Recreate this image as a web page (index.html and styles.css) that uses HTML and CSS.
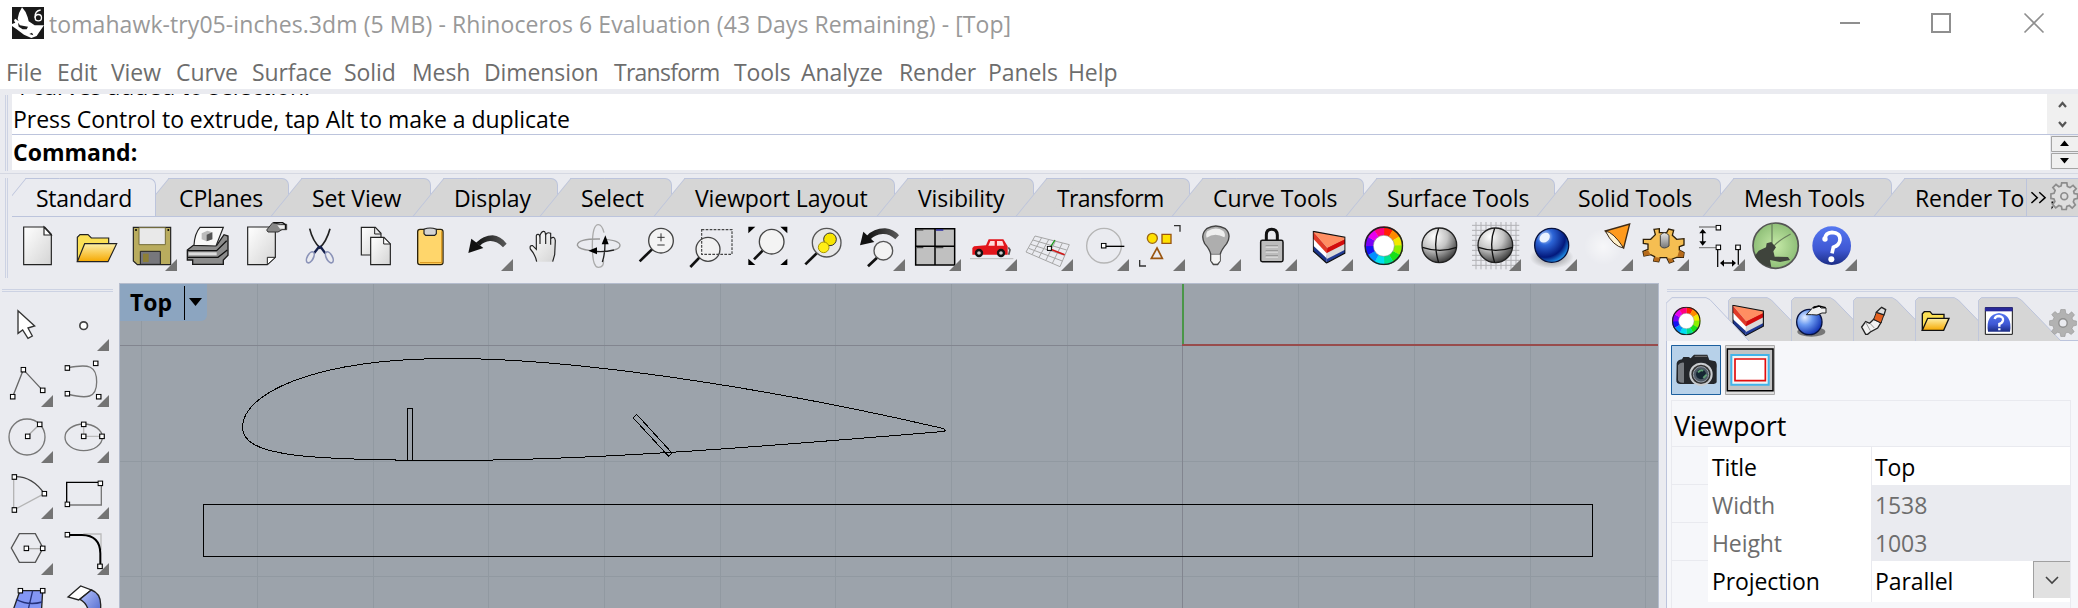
FILE: index.html
```html
<!DOCTYPE html>
<html lang="en">
<head>
<meta charset="utf-8">
<title>tomahawk-try05-inches.3dm - Rhinoceros 6</title>
<link rel="stylesheet" href="styles.css">
</head>
<body>
<svg class="defs" width="0" height="0" aria-hidden="true">
  <defs>
    <linearGradient id="paper" x1="0" y1="0" x2="1" y2="1"><stop offset="0" stop-color="#fff"/><stop offset="1" stop-color="#d4d4d4"/></linearGradient>
    <linearGradient id="gold" x1="0" y1="0" x2="0" y2="1"><stop offset="0" stop-color="#fdf0a8"/><stop offset="1" stop-color="#f5a800"/></linearGradient>
    <linearGradient id="steel" x1="0" y1="0" x2="0" y2="1"><stop offset="0" stop-color="#e8e8e8"/><stop offset="1" stop-color="#777"/></linearGradient>
    <linearGradient id="helpFill" x1="0" y1="0" x2="0" y2="1"><stop offset="0" stop-color="#5577f0"/><stop offset=".6" stop-color="#3f58d4"/><stop offset="1" stop-color="#1c2d85"/></linearGradient>
    <linearGradient id="lilac" x1="0" y1="0" x2="1" y2="1"><stop offset="0" stop-color="#b9c6ff"/><stop offset="1" stop-color="#4a63c8"/></linearGradient>
    <linearGradient id="fadeArc" x1="0" y1="0" x2="1" y2="0"><stop offset="0" stop-color="#111"/><stop offset="1" stop-color="#5a5a5a"/></linearGradient>
    <radialGradient id="ball" cx=".35" cy=".25" r=".85"><stop offset="0" stop-color="#fff"/><stop offset=".45" stop-color="#c4c4c4"/><stop offset="1" stop-color="#222"/></radialGradient>
    <radialGradient id="blueBall" cx=".3" cy=".25" r=".8"><stop offset="0" stop-color="#dcecff"/><stop offset=".3" stop-color="#2d66d8"/><stop offset=".75" stop-color="#03197c"/><stop offset="1" stop-color="#1f8fe8"/></radialGradient>
    <radialGradient id="softBall" cx=".32" cy=".32" r=".75"><stop offset="0" stop-color="#e6efff"/><stop offset=".4" stop-color="#6c9bf2"/><stop offset="1" stop-color="#0c2cae"/></radialGradient>
    <radialGradient id="shade"><stop offset="0" stop-color="#555" stop-opacity=".7"/><stop offset="1" stop-color="#555" stop-opacity="0"/></radialGradient>
    <radialGradient id="glow"><stop offset="0" stop-color="#fff" stop-opacity=".6"/><stop offset="1" stop-color="#fff" stop-opacity="0"/></radialGradient>
    <radialGradient id="leaf"><stop offset="0" stop-color="#c6eaa8"/><stop offset="1" stop-color="#8fbf78"/></radialGradient>
    <symbol id="wheel" viewBox="0 0 100 100">
      <g fill="none" stroke-width="26">
        <path d="M50 13A37 37 0 0 1 68.5 18" stroke="#ff2000"/><path d="M68 17.500A37 37 0 0 1 82 31.500" stroke="#ff8a00"/><path d="M81.500 31A37 37 0 0 1 87 50" stroke="#f2e800"/>
        <path d="M87 49A37 37 0 0 1 82 68.500" stroke="#8cf000"/><path d="M82 68A37 37 0 0 1 68.500 82" stroke="#18e018"/><path d="M69 81.500A37 37 0 0 1 50 87" stroke="#00e28c"/>
        <path d="M51 87A37 37 0 0 1 31.500 82" stroke="#00dff0"/><path d="M32 82A37 37 0 0 1 18 68.500" stroke="#0090ff"/><path d="M18 69A37 37 0 0 1 13 50" stroke="#1414f4"/>
        <path d="M13 51A37 37 0 0 1 18 31.500" stroke="#7a00f8"/><path d="M17.700 32A37 37 0 0 1 31.500 18" stroke="#e800f0"/><path d="M31 18.500A37 37 0 0 1 51 13" stroke="#ff0080"/>
      </g>
      <circle cx="50" cy="50" r="48" fill="none" stroke="#222" stroke-width="4"/><circle cx="50" cy="50" r="27" fill="#fff" stroke="#888" stroke-width="1.500"/>
    </symbol>
    <symbol id="cake" viewBox="0 0 100 100">
      <path d="M1 2 44 52 42 98 2 62z" fill="#1c3488"/><path d="M1 2 44 52 43 84 2 46z" fill="#fff"/><path d="M1 2 44 52 43 69 1 24z" fill="#e03a28"/>
      <path d="M44 52 98 24V68L42 98z" fill="#213b96"/><path d="M44 52 98 24V58L43 86z" fill="#d9d9d9"/><path d="M44 52 98 24V40L43 68z" fill="#d20c0c"/>
      <path d="M1 2 98 20 98 26 44 52z" fill="#ff8e62"/><path d="M1 2 98 20V68L42 98 2 62z" fill="none" stroke="#111" stroke-width="3.500"/>
    </symbol>
    <symbol id="cog" viewBox="-50 -50 100 100">
      <g fill="none" stroke="#8d8d8d" stroke-width="6"><path d="M-9-47H9L11-34 20-30 31-38 42-26 33-17 35-9 47-7V8L35 11 32 20 39 31 28 42 18 33 9 36 7 47H-8L-10 36-19 33-30 41-41 29-33 19-36 10-47 8V-8L-36-10-32-20-40-30-29-41-19-33-11-36z" fill="#dedede"/><circle r="12"/></g>
    </symbol>
    <symbol id="node" viewBox="0 0 18 18"><rect x="2" y="2" width="13" height="13" fill="#fff" stroke="#000" stroke-width="3.200"/></symbol>
  </defs>
</svg>

<header class="titlebar">
  <svg class="app-icon" viewBox="36 21 96 96"><path d="M36 21H132V117H36z" fill="#1a1a1a"/><path d="M66 22Q78 34 83 52L86 64 104 76 132 76 118 96 110 108 94 114 72 104 50 88 36 78V72L46 68 42 62 45 56 52 60Q54 40 66 22z" fill="#fff"/><path d="M54 68 60 76 84 80 80 88 68 88 56 80zM88 102 96 98 100 106z" fill="#1a1a1a"/><path d="M48 52 54 62" stroke="#1a1a1a" stroke-width="3"/><circle cx="115" cy="53" r="9.500" fill="none" stroke="#fff" stroke-width="4"/><path d="M105 53Q104 32 122 30" fill="none" stroke="#fff" stroke-width="4"/></svg>
  <h1 class="title">tomahawk-try05-inches.3dm (5 MB) - Rhinoceros 6 Evaluation (43 Days Remaining) - [Top]</h1>
  <svg class="window-buttons" viewBox="0 0 206 22"><path d="M1 11H21" stroke="#8f8f8f" stroke-width="2"/><rect x="93" y="2" width="18" height="18" fill="none" stroke="#8f8f8f" stroke-width="2"/><path d="M185.500 1.500 204.500 20.500M204.500 1.500 185.500 20.500" stroke="#8f8f8f" stroke-width="1.600"/></svg>
</header>
<nav class="menu"><span>File</span><span>Edit</span><span>View</span><span>Curve</span><span>Surface</span><span>Solid</span><span>Mesh</span><span>Dimension</span><span class="tight">Transform</span><span>Tools</span><span>Analyze</span><span>Render</span><span>Panels</span><span>Help</span></nav>

<section class="command">
  <div class="grip"></div>
  <div class="command-box">
    <div class="history"><div class="history-text"><p>4 curves added to selection.</p><p class="history-last">Press Control to extrude, tap Alt to make a duplicate</p></div>
      <svg class="scroll" viewBox="0 0 31 40"><path d="M12 13 15.500 9 19 13M12 28 15.500 32 19 28" fill="none" stroke="#555" stroke-width="2.200"/></svg></div>
    <div class="prompt"><b>Command:</b>
      <svg class="spin" viewBox="0 0 28 35"><path d="M1.500 1.500H30V16.500H1.500zM1.500 18.500H30V33.500H1.500z" fill="#f0f0f0" stroke="#a5a5a5"/><path d="M10 11H19L14.500 5.500zM10 23H19L14.500 28.500z"/></svg></div>
  </div>
</section>

<section class="toolbars">
  <div class="grip tall"></div>
  <div class="toolbars-body">
    <div class="tabs">
      <span class="tab active w-standard"><i>Standard</i></span><span class="tab w-cplanes"><i>CPlanes</i></span><span class="tab w-setview"><i>Set View</i></span><span class="tab w-display"><i>Display</i></span><span class="tab w-select"><i>Select</i></span><span class="tab w-layout"><i>Viewport Layout</i></span><span class="tab w-visibility"><i>Visibility</i></span><span class="tab w-transform"><i class="tight">Transform</i></span><span class="tab w-curve"><i>Curve Tools</i></span><span class="tab w-surface"><i>Surface Tools</i></span><span class="tab w-solid"><i>Solid Tools</i></span><span class="tab w-mesh"><i>Mesh Tools</i></span><span class="tab w-render"><i>Render To</i></span>
      <div class="more"><svg viewBox="0 0 52 38"><path d="M4.500 13.500 10.500 19 4.500 24.500M12.500 13.500 18.500 19 12.500 24.500" fill="none" stroke="#000" stroke-width="1.500"/><path d="M25 23h2v2h-2zM25 28h2l-2 3z"/><use href="#cog" x="23.500" y="3" width="29" height="29"/></svg></div>
    </div>
    <div class="tools">
      <svg viewBox="36 651 168 180"><path d="M71 681H134L154 703V794H71z" fill="url(#paper)" stroke="#222" stroke-width="3.500"/><path d="M132 681V705H154z" fill="#fff" stroke="#222" stroke-width="3.500"/></svg>
      <svg viewBox="204 651 168 180"><path d="M232 784V712L240 704H264L274 714H326V735L312 784z" fill="#fbe055" stroke="#222" stroke-width="3.500"/><path d="M232 785 254 731H350L324 785z" fill="url(#gold)" stroke="#222" stroke-width="3.500"/></svg>
      <div class="fly"><svg viewBox="372 651 168 180"><path d="M400 682H512V794H412L400 783z" fill="#b9ac5e" stroke="#222" stroke-width="3.500"/><path d="M417 683H496V734H417z" fill="#e9e9e9" stroke="#746c38" stroke-width="3"/><path d="M421 754H481V793H421z" fill="#77777c" stroke="#222" stroke-width="3"/><path d="M429 761H446V786H429z" fill="#8d7f36"/><circle cx="408" cy="690" r="3"/><circle cx="505" cy="690" r="3"/></svg></div>
      <svg viewBox="540 651 168 180"><path d="M562 750 580 736H650L672 704 684 708V766L670 780V793H578V780H562z" fill="#8c8c8c" stroke="#1b1b1b" stroke-width="4"/><path d="M582 736Q584 700 600 682H670L648 738z" fill="#f8f8f8" stroke="#222" stroke-width="3.500"/><path d="M605 700 622 692 637 697V718L620 724 605 718z" fill="#bbb"/><path d="M620 704 637 697V718L620 724z" fill="#555"/><path d="M564 752H650L680 722M564 772H654L682 750" fill="none" stroke="#111" stroke-width="4"/><path d="M566 757H650V766H566z" fill="#ddd"/></svg>
      <svg viewBox="708 651 168 180"><path d="M743 681H826V772L802 794H743z" fill="url(#paper)" stroke="#222" stroke-width="3.500"/><path d="M802 794V772H826z" fill="#fff" stroke="#222" stroke-width="3"/><path d="M800 690 818 668 842 673H860V689H846L834 696H804z" fill="#888" stroke="#333" stroke-width="3"/><path d="M820 668H848L856 674V688" fill="none" stroke="#111" stroke-width="4"/><path d="M832 676H854V686H840z" fill="#eee"/></svg>
      <svg viewBox="876 651 168 180"><path d="M929 686Q938 724 962 746M990 686Q980 724 957 746" fill="none" stroke="#222" stroke-width="5"/><path d="M960 738 976 760M959 738 942 760" stroke="#15204c" stroke-width="7"/><ellipse cx="931" cy="772" rx="9" ry="18" transform="rotate(28 931 772)" fill="none" stroke="#8b93b8" stroke-width="5"/><ellipse cx="988" cy="772" rx="9" ry="18" transform="rotate(-28 988 772)" fill="none" stroke="#8b93b8" stroke-width="5"/></svg>
      <svg viewBox="1044 651 168 180"><path d="M1084 682H1126L1143 700V765H1084z" fill="url(#paper)" stroke="#222" stroke-width="3.500"/><path d="M1124 682V702H1143" fill="none" stroke="#222" stroke-width="3"/><path d="M1112 712H1152L1171 732V794H1112z" fill="url(#paper)" stroke="#222" stroke-width="3.500"/><path d="M1151 712V732H1171z" fill="#fff" stroke="#222" stroke-width="3"/></svg>
      <svg viewBox="1212 651 168 180"><rect x="1253" y="688" width="76" height="106" rx="7" fill="#ffd66b" stroke="#2b220b" stroke-width="4"/><path d="M1325 694V788H1260" fill="none" stroke="#dd9c24" stroke-width="4"/><path d="M1272 688Q1290 680 1309 688V701L1304 706H1277L1272 701z" fill="#d4d4d4" stroke="#222" stroke-width="3.500"/></svg>
      <div class="fly"><svg viewBox="1380 651 168 180"><path d="M1428 728Q1450 707 1478 706 1502 708 1520 731L1509 742Q1490 722 1470 723 1452 725 1440 737z" fill="url(#fadeArc)"/><path d="M1405 759 1414 716 1450 744z" fill="#111"/></svg></div>
      <svg viewBox="-12 651 168 180"><path d="M50 785Q46 764 31 747 28 735 38 737L49 748V712Q48 702 55 703 60 704 60 718L62 729 64 704Q65 693 72 694 78 694 77 706V729L83 704Q86 695 92 698L91 732 98 716Q108 708 106 722L104 764 98 785z" fill="url(#paper)"/><path d="M50 785Q46 764 31 747 28 735 38 737L49 748V712Q48 702 55 703 60 704 60 718V732V706Q65 693 72 694 76 694 77 706V732V704Q82 695 92 700V734V716Q104 706 106 722L104 764 98 785" fill="none" stroke="#222" stroke-width="3.500"/></svg>
      <svg viewBox="156 651 168 180"><path d="M252 698Q246 674 235 674 217 674 217 738T235 802 250 780" fill="none" stroke="#aaa" stroke-width="4"/><path d="M240 717Q172 716 172 736 176 748 212 752M255 718Q300 722 300 736 300 746 282 750" fill="none" stroke="#999" stroke-width="4"/><path d="M255 720Q256 760 247 786M215 753Q250 758 282 750" fill="none" stroke="#222" stroke-width="4"/><path d="M256 706 266 733H245zM205 752 231 742V763z"/></svg>
      <svg viewBox="324 651 168 180"><path d="M359 784 396 748" stroke="#111" stroke-width="8"/><circle cx="423" cy="722" r="37" fill="#f3f3f3" stroke="#444" stroke-width="4"/><path d="M423 700V724M412 712H434M412 735H434" stroke="#333" stroke-width="3"/></svg>
      <svg viewBox="492 651 168 180"><path d="M511 801 538 773" stroke="#111" stroke-width="8"/><circle cx="564" cy="748" r="36" fill="#f1f1f1" stroke="#444" stroke-width="4"/><path d="M545 689H636V763H545z" fill="none" stroke="#444" stroke-width="3.500" stroke-dasharray="8 4"/></svg>
      <svg viewBox="660 651 168 180"><path d="M702 778 728 752" stroke="#111" stroke-width="8"/><circle cx="755" cy="725" r="37" fill="#f3f3f3" stroke="#444" stroke-width="4"/><path d="M685 680H706L685 700zM802 680V700L781 680zM685 795V776L706 795zM802 795H781L802 776z"/></svg>
      <svg viewBox="828 651 168 180"><path d="M856 793 892 758" stroke="#111" stroke-width="8"/><circle cx="920" cy="728" r="43" fill="#e8e8e8" stroke="#555" stroke-width="4"/><circle cx="930" cy="718" r="19" fill="#f7e500" stroke="#333" stroke-width="3"/><circle cx="911" cy="742" r="16" fill="#ffee18" stroke="#a79600" stroke-width="3"/></svg>
      <div class="fly"><svg viewBox="996 651 168 180"><path d="M1040 708Q1062 684 1096 685 1122 688 1137 706L1126 718Q1108 701 1088 702 1064 704 1052 718z" fill="url(#fadeArc)"/><path d="M1020 736 1030 695 1063 726z" fill="#111"/><path d="M1044 799 1071 773" stroke="#111" stroke-width="8"/><circle cx="1090" cy="752" r="28" fill="#f3f3f3" stroke="#555" stroke-width="4"/></svg></div>
      <div class="fly"><svg viewBox="1164 651 168 180"><path d="M1187 686H1304V795H1187z" fill="#c0c0c0" stroke="#000" stroke-width="4.500"/><path d="M1245 686V795M1187 739H1304" stroke="#000" stroke-width="4.500"/><path d="M1190 690H1210M1190 743H1210M1248 743H1270" stroke="#333" stroke-width="3"/><path d="M1248 690H1270" stroke="#19199c" stroke-width="4"/></svg></div>
      <div class="fly"><svg viewBox="1332 651 168 180"><path d="M1350 776H1480" stroke="#bbb" stroke-width="3"/><path d="M1357 744 1362 739 1398 736 1406 718H1450L1463 739V764H1357z" fill="#e2151b"/><path d="M1411 723H1424V737H1405zM1431 723H1447L1452 737H1431z" fill="#ffdada"/><path d="M1465 742 1470 750 1466 764" stroke="#555" stroke-width="5" fill="none"/><circle cx="1377" cy="759" r="9" fill="#ccc" stroke="#111" stroke-width="7"/><circle cx="1443" cy="759" r="9" fill="#ccc" stroke="#111" stroke-width="7"/></svg></div>
      <div class="fly"><svg viewBox="-60 171 168 180"><path d="M-15 228 88 254M-21 240 80 270M-28 253 74 286M-34 265 67 303M-42 276 60 320M-15 228-42 276M5 233-24 284M26 239-4 294M46 244 17 302M67 249 37 310M88 254 60 320" stroke="#a6a6a6" stroke-width="3"/><path d="M28 266 74 284" stroke="#d01818" stroke-width="5"/><path d="M28 266 45 240" stroke="#199a19" stroke-width="4"/><use href="#node" x="20" y="257" width="17" height="17"/></svg></div>
      <div class="fly"><svg viewBox="108 171 168 180"><circle cx="192" cy="257" r="52" fill="none" stroke="#b5b5b5" stroke-width="4"/><path d="M192 259H253" stroke="#000" stroke-width="4"/><use href="#node" x="182" y="248" width="19" height="19"/></svg></div>
      <div class="fly"><svg viewBox="276 171 168 180"><path d="M402 197H420V215M299 300V318H318" fill="none" stroke="#333" stroke-width="4"/><circle cx="337" cy="235" r="15" fill="#ffe100" stroke="#9e6a12" stroke-width="4"/><path d="M366 223H393V250H366z" fill="#ffe100" stroke="#9a5510" stroke-width="4"/><path d="M351 264 367 295H334z" fill="none" stroke="#9a5510" stroke-width="5"/></svg></div>
      <div class="fly"><svg viewBox="444 171 168 180"><path d="M512 282Q509 268 494 251 480 224 500 206 527 190 556 206 576 224 560 251 544 270 541 282V302L533 314H520L512 302z" fill="#aeaeae" stroke="#444" stroke-width="4"/><path d="M502 214Q527 198 550 213 558 224 553 232 525 216 500 233 496 222 502 214" fill="#efefef"/><path d="M513 283H541V302L532 312H521L513 302z" fill="#f4f4f4" stroke="#555" stroke-width="2"/></svg></div>
      <div class="fly"><svg viewBox="612 171 168 180"><path d="M679 242V225Q679 208 695 208T712 225V242" fill="none" stroke="#111" stroke-width="9"/><rect x="662" y="241" width="67" height="64" rx="5" fill="#bcbcbc" stroke="#111" stroke-width="4.500"/><path d="M677 258H714M677 273H714M677 288H714" stroke="#777" stroke-width="3"/><path d="M677 261H714M677 276H714M677 291H714" stroke="#eee" stroke-width="3"/></svg></div>
      <div class="fly"><svg viewBox="780 171 168 180"><use href="#cake" x="818" y="212" width="99" height="99"/></svg></div>
      <div class="fly"><svg viewBox="948 171 168 180"><use href="#wheel" x="973" y="199" width="117" height="117"/></svg></div>
      <svg viewBox="1116 171 168 180"><circle cx="1198" cy="256" r="52" fill="url(#ball)" stroke="#222" stroke-width="4"/><path d="M1147 262Q1200 280 1250 262M1196 205Q1178 250 1196 308" fill="none" stroke="#111" stroke-width="4"/></svg>
      <div class="fly"><svg viewBox="1284 171 168 180"><path d="M1308 186V328M1323 186V328M1338 186V328M1353 186V328M1368 186V328M1383 186V328M1398 186V328M1413 186V328M1428 186V328M1296 196H1438M1296 211H1438M1296 226H1438M1296 241H1438M1296 256H1438M1296 271H1438M1296 286H1438M1296 301H1438M1296 316H1438" stroke="#b1b1b5" stroke-width="3"/><circle cx="1366" cy="256" r="52" fill="url(#ball)" stroke="#222" stroke-width="4"/><path d="M1315 262Q1368 280 1418 262M1364 205Q1346 250 1364 308" fill="none" stroke="#111" stroke-width="4"/></svg></div>
      <div class="fly"><svg viewBox="1452 171 168 180"><ellipse cx="1535" cy="292" rx="66" ry="34" fill="url(#shade)"/><circle cx="1535" cy="256" r="51" fill="url(#blueBall)" stroke="#08123e" stroke-width="4"/><ellipse cx="1514" cy="233" rx="17" ry="13" transform="rotate(-40 1514 233)" fill="#e9f2ff"/></svg></div>
      <div class="fly"><svg viewBox="60 171 168 180"><ellipse cx="130" cy="260" rx="58" ry="55" fill="url(#glow)"/><path d="M136 213 209 192 191 264z" fill="#ff9a1c" stroke="#3e2b17" stroke-width="4"/><path d="M136 213Q160 216 191 264 160 260 136 213" fill="#fff2cf" stroke="#3e2b17" stroke-width="3"/></svg></div>
      <div class="fly"><svg viewBox="228 171 168 180"><path d="M282 208 298 206V218H320L326 207 341 211 337 226 350 238 372 236V255L358 260V270L372 278 370 292 350 292 337 297 341 304 328 309 320 293H300L296 305 281 303 284 290 272 284 252 288 249 274 264 268 264 252 250 250V238L272 238 286 224z" fill="#f5be52" stroke="#2e200a" stroke-width="4"/><path d="M250 276 264 270 272 284 252 288zM284 291 300 293 296 305 281 303zM322 294 337 297 341 304 328 309zM358 270 372 278 370 292 352 290z" fill="#b66b1c"/><path d="M301 226Q312 210 327 226V258Q312 270 301 258z" fill="url(#steel)" stroke="#444" stroke-width="3"/></svg></div>
      <div class="fly"><svg viewBox="396 171 168 180"><path d="M417 201H470M417 263H470" stroke="#888" stroke-width="4"/><path d="M428 214V250M473 268V321M535 268V314M488 309H521" stroke="#111" stroke-width="4"/><path d="M418 220H439L428 207zM418 244H439L428 257zM492 299V320L480 309zM516 299V320L528 309z"/><use href="#node" x="466" y="194" width="19" height="19"/><use href="#node" x="466" y="253" width="19" height="19"/><use href="#node" x="525" y="253" width="19" height="19"/></svg></div>
      <svg viewBox="564 171 168 180"><circle cx="647" cy="257" r="68" fill="url(#leaf)" stroke="#555" stroke-width="5"/><path d="M636 190V250M640 260Q654 242 692 222" fill="none" stroke="#687d5c" stroke-width="3.500"/><path d="M584 288 596 272 618 262 620 250 634 246 648 262 640 274 644 290 684 291 690 300 660 306 630 300 634 322Q596 314 584 288" fill="#3f443c"/></svg>
      <div class="fly"><svg viewBox="732 171 168 180"><circle cx="815" cy="257" r="58" fill="url(#helpFill)"/><path d="M795 236Q796 218 816 217 841 218 840 240 838 256 820 262L816 280" fill="none" stroke="#fff" stroke-width="11"/><circle cx="795" cy="237" r="8" fill="#fff"/><circle cx="814" cy="298" r="9" fill="#fff"/></svg></div>
    </div>
  </div>
</section>

<main class="workspace">
  <aside class="toolbox">
    <svg viewBox="0 78 168 168"><path d="M54 122V190L68 180 84 205 97 198 84 174 104 168z" fill="#fff" stroke="#333" stroke-width="4"/></svg>
    <div class="fly"><svg viewBox="168 78 168 168"><circle cx="251" cy="167" r="11.500" fill="#fff" stroke="#444" stroke-width="5"/></svg></div>
    <div class="fly"><svg viewBox="0 246 168 168"><path d="M38 380 70 299 128 361" fill="none" stroke="#666" stroke-width="4"/><use href="#node" x="29" y="371" width="19" height="19"/><use href="#node" x="61" y="290" width="19" height="19"/><use href="#node" x="119" y="352" width="19" height="19"/></svg></div>
    <div class="fly"><svg viewBox="168 246 168 168"><path d="M202 294C268 280 290 288 290 336S262 388 202 372" fill="none" stroke="#777" stroke-width="4"/><use href="#node" x="193" y="285" width="19" height="19"/><use href="#node" x="278" y="271" width="19" height="19"/><use href="#node" x="193" y="362" width="19" height="19"/><use href="#node" x="287" y="371" width="19" height="19"/></svg></div>
    <div class="fly"><svg viewBox="0 414 168 168"><circle cx="81" cy="501" r="54" fill="none" stroke="#777" stroke-width="4"/><path d="M82 499 119 463" stroke="#aaa" stroke-width="4"/><use href="#node" x="74" y="490" width="19" height="19"/><use href="#node" x="110" y="454" width="19" height="19"/></svg></div>
    <div class="fly"><svg viewBox="168 414 168 168"><ellipse cx="251" cy="502" rx="56" ry="40" fill="none" stroke="#777" stroke-width="4"/><path d="M251 463V499H305" fill="none" stroke="#bbb" stroke-width="4"/><use href="#node" x="242" y="454" width="19" height="19"/><use href="#node" x="242" y="490" width="19" height="19"/><use href="#node" x="297" y="490" width="19" height="19"/></svg></div>
    <div class="fly"><svg viewBox="0 582 168 168"><path d="M41 622V720L133 671" fill="none" stroke="#b5b5b5" stroke-width="4"/><path d="M43 620Q96 618 133 671" fill="none" stroke="#444" stroke-width="4"/><use href="#node" x="34" y="612" width="19" height="19"/><use href="#node" x="34" y="711" width="19" height="19"/><use href="#node" x="124" y="662" width="19" height="19"/></svg></div>
    <div class="fly"><svg viewBox="168 582 168 168"><path d="M200 705H304V638" fill="none" stroke="#777" stroke-width="4"/><path d="M200 705V637H304" fill="none" stroke="#000" stroke-width="4"/><use href="#node" x="193" y="694" width="19" height="19"/><use href="#node" x="292" y="631" width="19" height="19"/></svg></div>
    <div class="fly"><svg viewBox="0 750 168 168"><path d="M58 791H106L129 834 106 877H58L34 834z" fill="none" stroke="#555" stroke-width="4"/><path d="M80 836H128" stroke="#aaa" stroke-width="4"/><use href="#node" x="70" y="826" width="19" height="19"/><use href="#node" x="119" y="826" width="19" height="19"/></svg></div>
    <div class="fly"><svg viewBox="168 750 168 168"><path d="M250 792H303V840" fill="none" stroke="#bbb" stroke-width="4"/><path d="M202 795H246Q300 796 301 850V888" fill="none" stroke="#000" stroke-width="6"/><use href="#node" x="193" y="785" width="19" height="19"/><use href="#node" x="291" y="880" width="19" height="19"/></svg></div>
    <svg viewBox="0 918 168 168"><path d="M60 962H128L124 1030H36z" fill="#8396f4" stroke="#222" stroke-width="4"/><path d="M98 962 82 1030M48 988Q86 1008 126 996" fill="none" stroke="#25327c" stroke-width="4"/><use href="#node" x="52" y="953" width="19" height="19"/><use href="#node" x="119" y="953" width="19" height="19"/></svg>
    <svg viewBox="168 918 168 168"><path d="M204 981 242 948 274 960 236 990z" fill="#fff" stroke="#222" stroke-width="4"/><path d="M240 988 274 960Q304 970 302 1010V1040H268Q266 1002 240 988z" fill="url(#lilac)" stroke="#222" stroke-width="4"/></svg>
  </aside>

  <section class="viewport">
    <svg class="scene" viewBox="120 284 1538 324" shape-rendering="crispEdges">
      <path d="M141.500 284V608M257.500 284V608M373.500 284V608M488.500 284V608M604.500 284V608M720.500 284V608M835.500 284V608M951.500 284V608M1067.500 284V608M1298.500 284V608M1414.500 284V608M1530.500 284V608M1645.500 284V608M120 461.500H1658M120 576.500H1658" stroke="#9199a1"/>
      <path d="M120 345.500H1182M1182.500 346V608" stroke="#82858f"/>
      <path d="M1183 284V344" stroke="#4a9648" stroke-width="2"/><path d="M1182 345H1658" stroke="#984c4c" stroke-width="2"/>
      <g fill="none" stroke="#000">
        <path d="M242.500 427C242.500 395 310 358.500 451 358.500S800 395 941 428Q948 430 943.500 431.500C780 445 600 460.400 451 460.400S242.500 456 242.500 427z"/>
        <path d="M407.500 408.500H412.500V460.500H407.500zM636.800 414.500 633.300 418 668.600 456.300 672 453z"/>
        <path d="M203.500 504.500H1592.500V556.500H203.500z"/>
      </g>
    </svg>
    <div class="view-label"><b>Top</b><span class="view-menu"></span></div>
  </section>

  <aside class="panel">
    <div class="panel-tabs">
      <svg class="ptab active" viewBox="80 51 264 132"><path d="M80 186V70L98 53H200L212 59 330 184" fill="#eaebf0" stroke="#bcc4dc" stroke-width="3"/><use href="#wheel" x="98" y="80" width="86" height="86"/></svg>
      <svg class="ptab" viewBox="265 51 264 132"><path d="M266 186V62L275 53H383L396 61 515 184" fill="#d6d6d6" stroke="#bcc4dc" stroke-width="3"/><use href="#cake" x="278" y="74" width="95" height="95"/></svg>
      <svg class="ptab" viewBox="452 51 264 132"><path d="M453 186V62L462 53H570L583 61 702 184" fill="#d6d6d6" stroke="#bcc4dc" stroke-width="3"/><ellipse cx="513" cy="155" rx="42" ry="15" fill="#777"/><circle cx="507" cy="126" r="38" fill="url(#softBall)" stroke="#08123e" stroke-width="4"/><path d="M498 104 520 80 536 78 542 84H557V99H545L530 105 514 104z" fill="#eee" stroke="#222" stroke-width="3"/><path d="M518 84 536 78 556 83" fill="none" stroke="#000" stroke-width="4"/></svg>
      <svg class="ptab" viewBox="638 51 264 132"><path d="M639 186V62L648 53H756L769 61 888 184" fill="#d6d6d6" stroke="#bcc4dc" stroke-width="3"/><path d="M664 141 676 125 688 130 700 118 722 128 712 144 690 156 682 163H676z" fill="#f2f2f2" stroke="#222" stroke-width="4"/><path d="M700 118 708 97 731 104 722 129z" fill="#e4601e" stroke="#222" stroke-width="3"/><path d="M708 97 718 87 724 82 736 89 731 105z" fill="#ddd" stroke="#222" stroke-width="4"/><path d="M676 127 690 152M690 131 702 144" stroke="#999" stroke-width="3"/></svg>
      <svg class="ptab" viewBox="826 51 264 132"><path d="M827 186V62L836 53H944L957 61 1076 184" fill="#d6d6d6" stroke="#bcc4dc" stroke-width="3"/><path d="M848 151V101L854 95H871L878 103H913V114L903 151z" fill="#fbe055" stroke="#111" stroke-width="4"/><path d="M848 151 864 115H928L912 151z" fill="url(#gold)" stroke="#111" stroke-width="4"/></svg>
      <svg class="ptab" viewBox="1014 51 264 132"><path d="M1015 186V62L1024 53H1132L1145 61 1264 184" fill="#d6d6d6" stroke="#bcc4dc" stroke-width="3"/><path d="M1036 83H1117V163H1036z" fill="#fff" stroke="#111" stroke-width="3"/><path d="M1035 82H1118V94H1035z" fill="#29299a"/><path d="M1044 155Q1036 104 1077 99 1118 104 1110 155z" fill="url(#helpFill)"/><path d="M1064 117Q1066 108 1077 108 1091 110 1089 121 1086 130 1078 132V140M1078 145V151" fill="none" stroke="#fff" stroke-width="7"/></svg>
      <svg class="panel-cog" viewBox="-50 -50 100 100"><g fill="#b2b2b2" stroke="#8f8f8f" stroke-width="2"><path d="M-8-48H8L10-34 20-30 31-40 41-29 32-18 36-9 48-7V8L36 11 32 20 40 31 29 41 18 33 9 36 7 48H-8L-10 36-19 33-30 41-41 30-33 19-36 10-48 8V-8L-36-10-32-20-40-30-29-41-19-33-11-36z"/><circle r="15" fill="#eaebf0" stroke-width="5"/></g></svg>
    </div>
    <div class="panel-body">
      <div class="modes">
        <svg viewBox="93 195 150 150"><path d="M94.500 196.500H241.500V343.500H94.500z" fill="#b7d1e9" stroke="#1b5f9e" stroke-width="3"/><path d="M110 250Q112 240 126 238L130 231H146L152 235 162 224H202L208 240 226 244Q232 250 230 266V306Q228 312 216 312H122Q108 312 109 300z" fill="#24272b"/><path d="M114 256Q120 246 132 248V308Q114 310 114 298z" fill="#777b80"/><path d="M164 229H202" stroke="#777" stroke-width="3"/><circle cx="183" cy="283" r="32" fill="#333" stroke="#c9cccf" stroke-width="6"/><circle cx="183" cy="283" r="23" fill="#4f5a66" stroke="#959da6" stroke-width="3"/><circle cx="183" cy="283" r="15" fill="#152532"/><path d="M174 277Q182 268 190 272M190 294 200 284" stroke="#5f9c74" stroke-width="6"/></svg>
        <svg viewBox="255 195 150 150"><path d="M256.500 196.500H403.500V343.500H256.500z" fill="#ddd" stroke="#aaa" stroke-width="3"/><path d="M262 207H399V332H262z" fill="#c3c3c3" stroke="#000" stroke-width="4.500"/><path d="M274 225H386V314H274z" fill="#f4f4f4" stroke="#43b4ea" stroke-width="6"/><path d="M285 237H376V302H285z" fill="#fff" stroke="#e20d0d" stroke-width="5"/></svg>
      </div>
      <div class="props">
        <h2>Viewport</h2>
        <div class="row"><span>Title</span><span>Top</span></div>
        <div class="row off"><span>Width</span><span>1538</span></div>
        <div class="row off"><span>Height</span><span>1003</span></div>
        <div class="row"><span>Projection</span><span class="select">Parallel<svg viewBox="0 0 37 37"><path d="M.5 0V37M0 .5H37" stroke="#a0a0a0"/><path d="M13 16 19 22 25 16" fill="none" stroke="#444" stroke-width="1.600"/></svg></span></div>
      </div>
    </div>
  </aside>
</main>
</body>
</html>
```

FILE: styles.css
```css
* { box-sizing: border-box; }
body { margin: 0; width: 2078px; height: 608px; overflow: hidden; display: flex; flex-direction: column; background: #eaebf0; color: #000; font: 23px/30px "Open Sans", "Noto Sans", sans-serif; white-space: nowrap; }
h1, h2, p { margin: 0; font-weight: 400; }
svg { display: block; flex: none; }
.defs { position: absolute; }

.titlebar { height: 54px; display: flex; align-items: flex-start; background: #fff; padding: 7px 33px 0 12px; color: #999; }
.app-icon { width: 32px; height: 32px; }
.title { font-size: 23px; line-height: 35px; margin-left: 5px; letter-spacing: .08px; }
.window-buttons { width: 206px; height: 22px; margin: 5px 0 0 auto; }

.menu { height: 35px; flex: none; background: #fff; color: #6d6d6d; padding-left: 6px; line-height: 37px; letter-spacing: -.1px; display: grid; grid-template-columns: 51px 54px 65px 76px 92px 68px 72px 130px 120px 67px 98px 89px 80px 60px; }
.menu .tight { letter-spacing: -.75px; }

.command { height: 85px; flex: none; display: flex; padding-top: 5px; border-bottom: 1px solid #d5d8e2; }
.grip { width: 3px; height: 76px; margin: 1px 4px 0 5px; border: solid #ccd2e3; border-width: 0 1px; }
.grip.tall { height: 100px; margin-top: 4px; }
.command-box { flex: 1; height: 76px; background: #fff; }
.history { height: 41px; display: flex; border-bottom: 1px solid #bcc4dc; }
.history-text { flex: 1; height: 40px; overflow: hidden; display: flex; flex-direction: column; justify-content: flex-end; padding-left: 1px; line-height: 33px; letter-spacing: -.05px; }
.history-text p { flex: none; height: 33px; }
.history-last { margin-bottom: -2px; }
.scroll { width: 31px; height: 40px; background: #f0f0f0; }
.prompt { height: 35px; padding-left: 1px; line-height: 35px; display: flex; justify-content: space-between; }
.spin { width: 28px; height: 35px; background: #eaebf0; }

.toolbars { height: 109px; flex: none; display: flex; }
.toolbars-body { flex: 1; min-width: 0; padding-top: 4px; }
.tabs { position: relative; z-index: 0; height: 39px; display: flex; overflow: hidden; padding-left: 13px; border-bottom: 1px solid #bcc4dc; letter-spacing: -.1px; }
.tab { position: relative; flex: none; height: 38px; margin-right: 12px; background: #d6d6d6; border: solid #bcc4dc; border-width: 1px 1px 0 0; border-top-right-radius: 7px; line-height: 39px; }
.tab::before { content: ""; position: absolute; z-index: 0; left: -31px; top: -1px; width: 33px; height: 38px; background: #d6d6d6; border: solid #bcc4dc; border-width: 1px 0 0 1px; transform: skewX(-39.2deg); transform-origin: 0 100%; }
.tab i { position: relative; z-index: 1; padding-left: 11px; font-style: normal; }
.tab .tight { letter-spacing: -.6px; }
.tab.active { z-index: 2; height: 39px; margin-bottom: -1px; }
.tab.active, .tab.active::before { background: #eaebf0; }
.w-standard { width: 131px; letter-spacing: -.25px; } .w-cplanes { width: 121px; } .w-setview { width: 130px; } .w-display { width: 115px; }
.w-select { width: 102px; } .w-layout { width: 211px; } .w-visibility { width: 127px; } .w-transform { width: 144px; }
.w-curve { width: 162px; } .w-surface { width: 179px; } .w-solid { width: 154px; } .w-mesh { width: 159px; } .w-render { width: 180px; }
.more { position: absolute; z-index: 3; right: 0; top: 1px; width: 52px; height: 37px; background: #d6d6d6; border-left: 1px solid #bcc4dc; }
.tools { display: flex; height: 60px; }
.tools svg { width: 56px; height: 60px; }
.fly { position: relative; }
.fly::after { content: ""; position: absolute; left: 41px; top: 42px; width: 12px; height: 12px; background: #747474; clip-path: polygon(100% 0, 100% 100%, 0 100%); }

.workspace { flex: 1; min-height: 0; display: flex; }
.toolbox { width: 119px; height: 325px; overflow: hidden; display: grid; grid-template-columns: 56px 56px; grid-auto-rows: 56px; padding-top: 13px; background: linear-gradient(#ccd2e3, #ccd2e3) 2px 6px / 111px 1px no-repeat, linear-gradient(#ccd2e3, #ccd2e3) 2px 8px / 111px 1px no-repeat; }
.toolbox svg { width: 56px; height: 56px; }
.toolbox .fly::after { top: 43px; }

.viewport { position: relative; width: 1540px; border: solid #b4bccd; border-width: 1px 1px 0; background: #9ca3ab; }
.scene { width: 1538px; height: 324px; }
.view-label { position: absolute; left: 0; top: 0; width: 87px; height: 37px; display: flex; background: #8ca5c0; border-bottom-right-radius: 6px; padding-left: 10px; line-height: 37px; }
.view-label b { width: 54px; }
.view-menu { width: 18px; height: 34px; margin-top: 2px; border-left: 1px solid #000; display: flex; justify-content: flex-end; }
.view-menu::after { content: ""; width: 13px; height: 8px; margin-top: 12px; background: #000; clip-path: polygon(0 0, 100% 0, 50% 100%); }

.panel { flex: 1; min-width: 0; margin-left: 7px; padding-top: 14px; background: linear-gradient(#ccd2e3, #ccd2e3) 1px 6px / 100% 1px no-repeat, linear-gradient(#ccd2e3, #ccd2e3) 1px 8px / 100% 1px no-repeat; }
.panel-tabs { position: relative; height: 44px; display: flex; border-bottom: 1px solid #bcc4dc; }
.ptab { position: relative; width: 88px; height: 44px; margin-right: -25.700px; }
.ptab.active { z-index: 1; }
.panel-cog { position: absolute; z-index: 2; right: 1px; top: 12px; width: 28px; height: 28px; }
.panel-body { height: 270px; padding: 4px 7px 0 4px; background: #f6f7fa; border-left: 1px solid #bcc4dc; }
.modes { display: flex; gap: 4px; }
.modes svg { width: 50px; height: 50px; }
.props { margin-top: 5px; border: 1px solid #e9eaef; height: 230px; }
.props h2 { height: 45px; padding-left: 2px; font-size: 27px; line-height: 49px; }
.row { display: grid; grid-template-columns: 163px 1fr; height: 38px; padding-left: 36px; border-top: 1px solid #e9eaef; line-height: 41px; letter-spacing: -.1px; }
.row span { background: #fff; padding-left: 4px; }
.row span + span { border-left: 1px solid #e9eaef; padding-left: 3px; }
.row.off { color: #6d6d6d; }
.row.off span + span { background: #eaebf0; }
.select { display: flex; justify-content: space-between; }
.select svg { width: 37px; height: 37px; background: #e1e1e1; }
```
